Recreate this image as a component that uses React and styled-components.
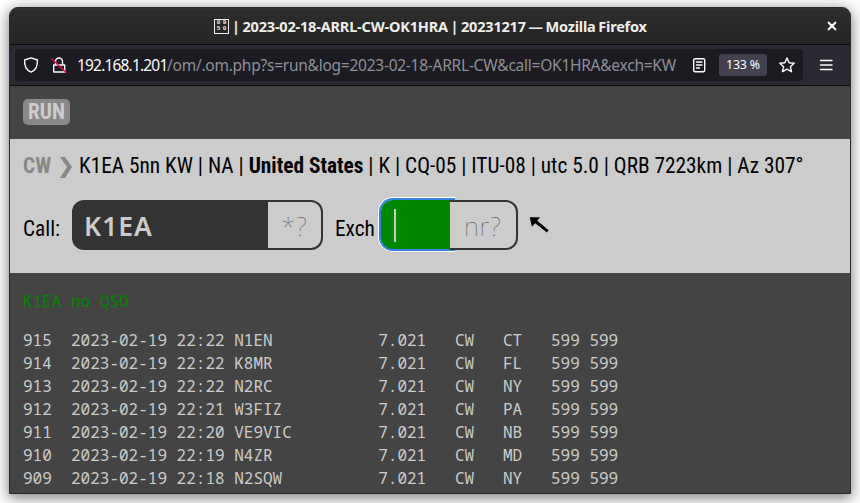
import React from "react";
import styled, { createGlobalStyle } from "styled-components";

const Global = createGlobalStyle`
  *{box-sizing:border-box}
  html,body{margin:0;background:#fff;overflow:hidden}
`;
const Desktop = styled.main`width:860px;height:503px;padding:7px 9px 9px;overflow:hidden;background:#fff;`;
const Window = styled.section`
  width:842px;height:487px;border:1px solid #2b2b2b;border-radius:9px 9px 0 0;overflow:hidden;background:#444;
  display:flex;flex-direction:column;box-shadow:0 3px 14px 1px rgba(0,0,0,.5);
`;
const TitleBar = styled.header`
  flex:0 0 37px;height:37px;display:grid;grid-template-columns:204px 1fr 14px 11px;align-items:center;
  background:linear-gradient(#333 0,#2c2c2c 3px,#262626);border-bottom:1px solid #080808;color:#eeeeec;
`;
const Title = styled.h1`
  grid-column:2;margin:0;display:flex;align-items:center;gap:3px;font:700 14.5px/20px "Noto Sans",sans-serif;
  letter-spacing:-.19px;word-spacing:-.9px;white-space:pre;
`;
const Line = styled.span`display:inline-block;white-space:pre;`;
const Missing = styled.span`
  width:15px;height:15px;border:1px solid #eeeeec;display:grid;grid-template-columns:5px 5px;grid-template-rows:6px 6px;
  column-gap:1px;justify-content:center;align-content:center;font:700 6px/6px "Liberation Mono",monospace;letter-spacing:0;text-align:center;
`;
const Toolbar = styled.nav`
  flex:0 0 41px;height:41px;padding:4px 16px 4px 5px;display:flex;align-items:center;justify-content:space-between;
  background:#2b2a33;border-bottom:1px solid #0c0c0d;
`;
const AddressBar = styled.div`
  width:788px;height:32px;padding-left:8px;border-radius:4px;background:#1c1b22;color:#fbfbfe;
  display:flex;align-items:center;
`;
const Icon = styled.svg`display:block;flex:none;width:${p => p.$s || 16}px;height:${p => p.$s || 16}px;margin-left:${p => p.$ml || 0}px;fill:none;stroke:#fbfbfe;stroke-width:${p => p.$stroke || 1.4};stroke-linecap:round;stroke-linejoin:round;`;
const Address = styled.div`width:602px;margin-left:10px;display:flex;font:400 15.5px/24px "Noto Sans",sans-serif;color:#8f8f98;`;
const Host = styled.span`width:90px;color:#fbfbfe;letter-spacing:-.82px;white-space:pre;`;
const Path = styled.span`letter-spacing:-.25px;white-space:pre;`;
const Zoom = styled.div`margin-left:12px;width:48px;height:22px;border-radius:3px;background:#42414d;color:#fbfbfe;font:400 12.4px/22px "Noto Sans",sans-serif;letter-spacing:-.15px;text-align:center;`;
const Page = styled.div`flex:1;min-height:0;overflow:hidden;background:#444;font-family:"Roboto Condensed",Roboto,sans-serif;font-stretch:75%;`;
const Modes = styled.div`height:53px;padding:13px 0 0 13px;`;
const Mode = styled.div`width:47px;height:26px;border-radius:5px;background:#888;color:#ccc;font-size:21.33px;font-weight:700;line-height:25px;padding-left:5px;`;
const Panel = styled.section`height:134px;padding:13px 0 0 13px;background:#ccc;color:#000;font-size:21.33px;`;
const Station = styled.div`height:28px;line-height:28px;display:flex;`;
const ModeTag = styled.b`width:56px;color:#888;display:flex;align-items:center;gap:8.5px;`;
const Chevron = styled.svg`width:12px;height:22px;margin-top:2px;fill:#888;`;
const Entry = styled.div`height:50px;margin-top:20px;display:flex;align-items:center;`;
const Label = styled.label`width:${p => p.$w}px;margin-left:${p => p.$ml || 0}px;padding-top:7px;line-height:28px;`;
const Field = styled.div`
  width:${p => p.$w}px;height:50px;padding-left:12px;border-radius:12px 0 0 12px;background:${p => p.$active ? "#080" : "#333"};
  color:#ccc;font:600 26.5px/52px "Noto Sans",sans-serif;letter-spacing:1px;display:flex;align-items:center;position:relative;
`;
const Value = styled.span`padding-top:1px;`;
const FocusRing = styled.i`
  position:absolute;left:-3px;top:-3px;width:77px;height:55px;border:1px solid #fff;border-right:0;border-radius:15px 0 0 15px;pointer-events:none;
  &::before{content:"";position:absolute;inset:0;border:2px solid #3584e4;border-right:0;border-radius:14px 0 0 14px;}
`;
const Caret = styled.i`width:2px;height:33px;background:#ccc;margin-left:1px;`;
const Hint = styled.div`
  width:${p => p.$w}px;height:50px;border:2px solid #333;border-left:0;border-radius:0 12px 12px 0;background:#ccc;color:#666;
  font:100 26px/49px "Noto Sans",sans-serif;letter-spacing:.7px;padding-left:${p => p.$pad}px;white-space:pre;position:relative;
`;
const Arrow = styled.svg`width:22px;height:18px;margin:0 0 0 11px;`;
const Log = styled.section`padding:16px 0 0 13px;color:#ccc;font:400 16px/23px "Noto Sans Mono","DejaVu Sans Mono",monospace;white-space:pre;`;
const Notice = styled.div`height:24px;line-height:24px;margin-bottom:16px;color:#080;`;
const Row = styled.div`height:23px;display:grid;grid-template-columns:48px 163.2px 144px 76.8px 48px 48px 1fr;`;

const rows = [
  ["915","22:22","N1EN","CT"],["914","22:22","K8MR","FL"],["913","22:22","N2RC","NY"],["912","22:21","W3FIZ","PA"],
  ["911","22:20","VE9VIC","NB"],["910","22:19","N4ZR","MD"],["909","22:18","N2SQW","NY"],
];

export default function App() {
  return <><Global/><Desktop><Window>
    <TitleBar>
      <Title><Missing><span>0</span><span>9</span><span>5</span><span>0</span></Missing><Line>| 2023-02-18-ARRL-CW-OK1HRA | 20231217 — Mozilla Firefox</Line></Title>
      <Icon $s={14} $stroke={2.2} viewBox="0 0 14 14"><path d="M3.700 3.700l6.600 6.600M10.300 3.700l-6.600 6.600"/></Icon>
    </TitleBar>
    <Toolbar>
      <AddressBar>
        <Icon viewBox="0 0 16 16"><path d="M8 .8 14.400 3c.4 5.500-1.300 10-6.400 12.200C2.900 13 1.200 8.500 1.600 3z"/></Icon>
        <Icon $ml={12} viewBox="0 0 16 16"><path d="M2.700 8h11v7h-11zM4.500 8V4.500a3.500 3.500 0 0 1 7 0V8"/><path d="M1 2l14 13.500" stroke="#e8113f"/></Icon>
        <Address><Host>192.168.1.201</Host><Path>/om/.om.php?s=run&amp;log=2023-02-18-ARRL-CW&amp;call=OK1HRA&amp;exch=KW</Path></Address>
        <Icon $ml={12} viewBox="0 0 16 16"><rect x="2.700" y="1.700" width="11" height="13" rx="1.500"/><path d="M5.500 5h5.500M5.500 8h5.500M5.500 11h3"/></Icon>
        <Zoom>133 %</Zoom>
        <Icon $ml={12} viewBox="0 0 16 16"><path d="m8 1 2.100 4.700 5.100.6-3.800 3.400 1.100 5L8 12.200l-4.500 2.500 1.100-5L.8 6.300l5.100-.6z"/></Icon>
      </AddressBar>
      <Icon viewBox="0 0 16 16"><path d="M2.500 3.500h11.500M2.500 8h11.500M2.500 12.500h11.500"/></Icon>
    </Toolbar>
    <Page>
      <Modes><Mode>RUN</Mode></Modes>
      <Panel>
        <Station><ModeTag>CW<Chevron viewBox="0 0 12 22"><path d="M0 1h5l7 10-7 11H0l7-11z"/></Chevron></ModeTag><Line>K1EA 5nn KW | NA | <b>United States</b> | K | CQ-05 | ITU-08 | utc 5.0 | QRB 7223km | Az 307°</Line></Station>
        <Entry>
          <Label $w={49}>Call:</Label><Field $w={196}><Value>K1EA</Value></Field><Hint $w={55} $pad={13}>*?</Hint>
          <Label $w={46} $ml={12}>Exch</Label>
          <Field $w={69} $active><Caret/><FocusRing/></Field><Hint $w={68} $pad={14}>nr?</Hint>
          <Arrow viewBox="0 0 22 18"><path d="M.7 1.200 11 1.300 8.300 4.700 19.700 14.200 17.900 16.400 6.200 7.300 2.900 10.800z"/></Arrow>
        </Entry>
      </Panel>
      <Log><Notice>K1EA no QSO</Notice>{rows.map(r => <Row key={r[0]}><span>{r[0]}</span><span>2023-02-19 {r[1]}</span><span>{r[2]}</span><span>7.021</span><span>CW</span><span>{r[3]}</span><span>599 599</span></Row>)}</Log>
    </Page>
  </Window></Desktop></>;
}
